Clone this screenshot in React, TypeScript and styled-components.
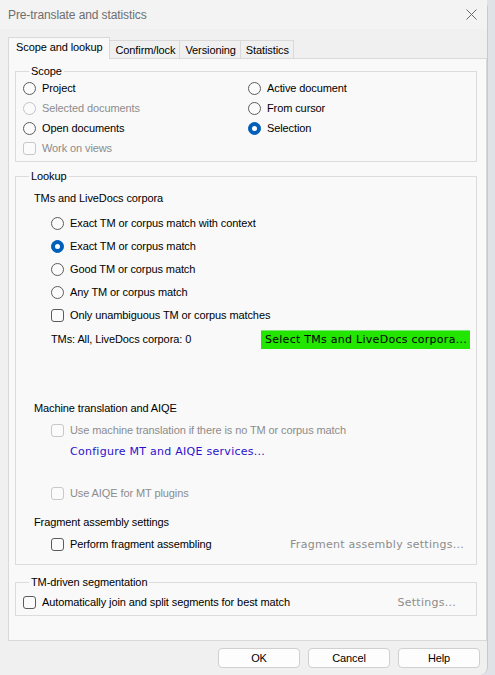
import React from "react";
import styled, { createGlobalStyle, css } from "styled-components";

const Global = createGlobalStyle`
  html, body { margin: 0; padding: 0; background: #dfe3e8; }
  body { width: 495px; height: 675px; overflow: hidden; }
  * { box-sizing: border-box; }
`;

const UI = `"Liberation Sans", Arial, sans-serif`;
const WIDE = `"DejaVu Sans", "Liberation Sans", sans-serif`;

const Window = styled.div`
  width: 488px;
  height: 675px;
  background: #f0f0f0;
  border-right: 1px solid #c9c9c9;
  border-top-right-radius: 8px;
  border-bottom-right-radius: 8px;
  display: flex;
  flex-direction: column;
  font-family: ${UI};
  font-size: 11px;
  letter-spacing: -0.1px;
  color: #000;
`;

const TitleBar = styled.div`
  height: 29px;
  display: flex;
  align-items: center;
  justify-content: space-between;
  padding: 0 10px 0 8px;
  background: #f3f3f3;
  color: #6e6e6e;
  font-size: 12px;
  letter-spacing: -0.1px;
`;

const Body = styled.div`
  flex: 1;
  display: flex;
  flex-direction: column;
  padding: 8px 0 0 8px;
`;

const TabStrip = styled.div`
  display: flex;
  align-items: flex-end;
  height: 21px;
  position: relative;
  z-index: 1;
`;

const Tab = styled.div<{ $active?: boolean }>`
  display: flex;
  align-items: center;
  padding: 0 4px 0 5px;
  height: 18px;
  border: 1px solid #d9d9d9;
  border-bottom: none;
  margin-left: -1px;
  background: #f0f0f0;
  ${(p) =>
    p.$active &&
    css`
      margin-left: 0;
      padding: 0 7px 3px 7px;
      background: #f9f9f9;
      margin-bottom: -1px;
      height: 22px;
    `}
`;

const Panel = styled.div`
  width: 479px;
  height: 583px;
  background: #f9f9f9;
  border: 1px solid #d9d9d9;
  padding: 4px 9px 0 6px;
  display: flex;
  flex-direction: column;
`;

const Group = styled.fieldset<{ $gap?: number; $padBottom?: number }>`
  margin: ${(p) => p.$gap ?? 0}px 0 0 0;
  padding: 0 6px ${(p) => p.$padBottom ?? 2}px 7px;
  border: 1px solid #dcdcdc;
  min-width: 0;
  display: flex;
  flex-direction: column;
`;

const Legend = styled.legend`
  padding: 0 2px;
  margin-left: 6px;
  line-height: 16px;
  height: 16px;
`;

const ScopeGrid = styled.div`
  display: grid;
  grid-template-columns: 225px 1fr;
  grid-auto-rows: 20px;
  margin-top: -1px;
`;

const Row = styled.div<{ $mt?: number; $indent?: number }>`
  display: flex;
  align-items: center;
  height: 20px;
  margin-top: ${(p) => p.$mt ?? 0}px;
  padding-left: ${(p) => p.$indent ?? 0}px;
  white-space: nowrap;
`;

const Label = styled.span<{ $disabled?: boolean }>`
  color: ${(p) => (p.$disabled ? "#8c8c8c" : "#000")};
`;

const RadioMark = styled.span<{ $checked?: boolean; $disabled?: boolean }>`
  width: 13px;
  height: 13px;
  border-radius: 50%;
  flex: none;
  margin-right: 6px;
  background: #fbfbfb;
  border: 1px solid ${(p) => (p.$disabled ? "#c4c4c4" : "#5c5c5c")};
  display: flex;
  align-items: center;
  justify-content: center;
  ${(p) =>
    p.$checked &&
    css`
      background: #005fb8;
      border-color: #005fb8;
      &::after {
        content: "";
        width: 5px;
        height: 5px;
        border-radius: 50%;
        background: #fff;
      }
    `}
`;

const CheckMark = styled.span<{ $disabled?: boolean }>`
  width: 13px;
  height: 13px;
  border-radius: 3px;
  flex: none;
  margin-right: 6px;
  background: #fbfbfb;
  border: 1px solid ${(p) => (p.$disabled ? "#c8c8c8" : "#5c5c5c")};
`;

const Spacer = styled.span`
  flex: 1;
`;

const GreenButton = styled.div`
  height: 19px;
  width: 209px;
  background: #22e500;
  border-top: 1px solid #7ee87a;
  display: flex;
  align-items: center;
  padding-left: 4px;
  font-family: ${WIDE};
  font-size: 11px;
  letter-spacing: 0.27px;
  color: #000;
`;

const WideText = styled.span<{ $color: string; $right?: number }>`
  font-family: ${WIDE};
  font-size: 11px;
  letter-spacing: 0.27px;
  color: ${(p) => p.$color};
  margin-right: ${(p) => p.$right ?? 0}px;
`;

const ButtonRow = styled.div`
  display: flex;
  justify-content: flex-end;
  gap: 8px;
  padding: 7px 7px 0 0;
`;

const Button = styled.div`
  width: 82px;
  height: 20px;
  border: 1px solid #d0d0d0;
  border-radius: 4px;
  background: #fdfdfd;
  display: flex;
  align-items: center;
  justify-content: center;
`;

function Radio({ label, checked, disabled }: { label: string; checked?: boolean; disabled?: boolean }) {
  return (
    <>
      <RadioMark $checked={checked} $disabled={disabled} />
      <Label $disabled={disabled}>{label}</Label>
    </>
  );
}

function Check({ label, disabled }: { label: string; disabled?: boolean }) {
  return (
    <>
      <CheckMark $disabled={disabled} />
      <Label $disabled={disabled}>{label}</Label>
    </>
  );
}

export default function App() {
  return (
    <>
      <Global />
      <Window>
        <TitleBar>
          <span>Pre-translate and statistics</span>
          <svg width="11" height="11" viewBox="0 0 11 11">
            <path d="M0.5 0.5 L10.5 10.5 M10.5 0.5 L0.5 10.5" stroke="#6a6a6a" strokeWidth="1" />
          </svg>
        </TitleBar>
        <Body>
          <TabStrip>
            <Tab $active>Scope and lookup</Tab>
            <Tab>Confirm/lock</Tab>
            <Tab>Versioning</Tab>
            <Tab>Statistics</Tab>
          </TabStrip>
          <Panel>
            <Group $padBottom={3}>
              <Legend>Scope</Legend>
              <ScopeGrid>
                <Row><Radio label="Project" /></Row>
                <Row><Radio label="Active document" /></Row>
                <Row><Radio label="Selected documents" disabled /></Row>
                <Row><Radio label="From cursor" /></Row>
                <Row><Radio label="Open documents" /></Row>
                <Row><Radio label="Selection" checked /></Row>
                <Row><Check label="Work on views" disabled /></Row>
              </ScopeGrid>
            </Group>
            <Group $gap={6} $padBottom={10}>
              <Legend>Lookup</Legend>
              <Row $mt={4} $indent={11}>TMs and LiveDocs corpora</Row>
              <Row $mt={5} $indent={28}><Radio label="Exact TM or corpus match with context" /></Row>
              <Row $mt={3} $indent={28}><Radio label="Exact TM or corpus match" checked /></Row>
              <Row $mt={3} $indent={28}><Radio label="Good TM or corpus match" /></Row>
              <Row $mt={3} $indent={28}><Radio label="Any TM or corpus match" /></Row>
              <Row $mt={3} $indent={28}><Check label="Only unambiguous TM or corpus matches" /></Row>
              <Row $mt={4} $indent={28}>
                <span>TMs: All, LiveDocs corpora: 0</span>
                <Spacer />
                <GreenButton>Select TMs and LiveDocs corpora...</GreenButton>
              </Row>
              <Row $mt={49} $indent={11}>Machine translation and AIQE</Row>
              <Row $mt={2} $indent={28}><Check label="Use machine translation if there is no TM or corpus match" disabled /></Row>
              <Row $mt={1} $indent={47}><WideText $color="#2a10cf">Configure MT and AIQE services...</WideText></Row>
              <Row $mt={22} $indent={28}><Check label="Use AIQE for MT plugins" disabled /></Row>
              <Row $mt={9} $indent={11}>Fragment assembly settings</Row>
              <Row $mt={2} $indent={28}>
                <Check label="Perform fragment assembling" />
                <Spacer />
                <WideText $color="#8c8c8c" $right={6}>Fragment assembly settings...</WideText>
              </Row>
            </Group>
            <Group $gap={9} $padBottom={3}>
              <Legend>TM-driven segmentation</Legend>
              <Row $mt={2}>
                <Check label="Automatically join and split segments for best match" />
                <Spacer />
                <WideText $color="#8c8c8c" $right={14}>Settings...</WideText>
              </Row>
            </Group>
          </Panel>
          <ButtonRow>
            <Button>OK</Button>
            <Button>Cancel</Button>
            <Button>Help</Button>
          </ButtonRow>
        </Body>
      </Window>
    </>
  );
}
